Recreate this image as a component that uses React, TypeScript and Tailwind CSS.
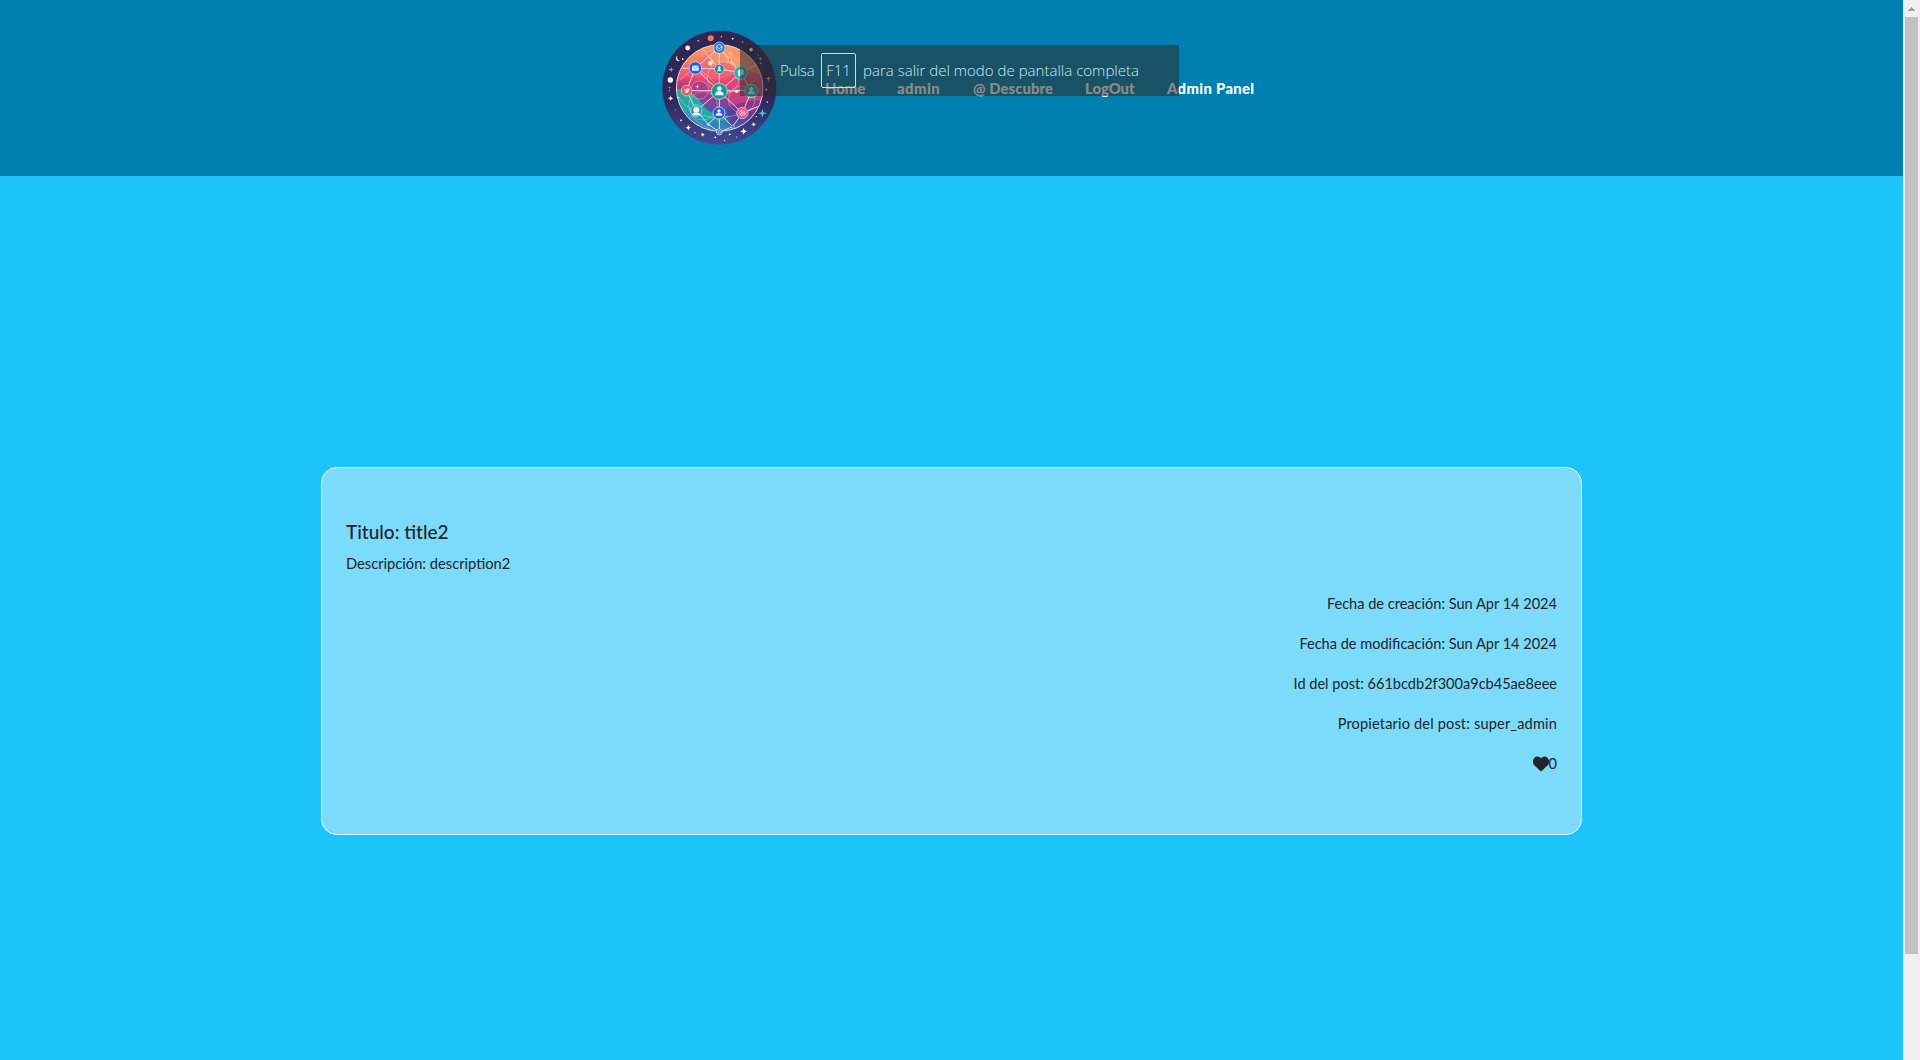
const body = "font-['Lato',sans-serif]";

const stars: [number, number, number][] = [
  [113, 84, 8], [61, 180, 9], [303, 89, 6], [62, 235, 4], [86, 233, 2], [93, 301, 3], [115, 323, 4], [158, 344, 4],
  [281, 334, 5], [311, 313, 4], [239, 343, 3], [332, 130, 3], [349, 209, 3], [60, 149, 2], [98, 117, 3], [145, 62, 3],
  [214, 50, 2], [248, 56, 3], [278, 66, 2], [352, 246, 3], [331, 243, 2], [196, 352, 3], [224, 361, 2], [77, 270, 2],
  [135, 338, 2], [260, 351, 2], [325, 105, 2], [58, 212, 2], [319, 290, 2],
];

const sparkles: [number, number, number, string][] = [
  [337, 280, 14, '#3fc4e8'], [355, 176, 9, '#ff90a0'], [64, 149, 8, '#55c9d6'], [62, 235, 9, '#fff'],
  [115, 323, 9, '#fff'], [281, 334, 11, '#fff'], [311, 313, 8, '#ddd'], [158, 344, 7, '#fff'],
  [59, 203, 5, '#f06b80'], [242, 100, 7, '#ffe3d0'], [142, 200, 7, '#ffd0e8'], [331, 116, 6, '#ddd'],
];

const nodes: [number, number, number, string][] = [
  [208, 83, 17, '#2776cf'], [136, 144, 19, '#315ce0'], [208, 147, 14, '#197e91'], [272, 158, 20, '#1fb5bb'],
  [110, 212, 16, '#ef5060'], [208, 214, 24, '#17998f'], [304, 213, 20, '#22b9b5'], [139, 272, 17, '#348fae'],
  [207, 279, 18, '#3454d8'], [277, 279, 17, '#ef5682'], [208, 336, 9, '#5a63c9'],
];

function Logo() {
  return (
    <svg className="h-[115px] w-[115px]" viewBox="36 30 345 345" aria-label="logo">
      <defs>
        <linearGradient id="ring" x1="0" y1="0" x2="0" y2="1">
          <stop offset="0" stopColor="#30264f" />
          <stop offset=".6" stopColor="#30275b" />
          <stop offset="1" stopColor="#414a94" />
        </linearGradient>
        <linearGradient id="globe" x1=".55" y1="0" x2=".4" y2="1">
          <stop offset="0" stopColor="#fb9c6c" />
          <stop offset=".25" stopColor="#f5805f" />
          <stop offset=".42" stopColor="#e8476d" />
          <stop offset=".6" stopColor="#9c3a8d" />
          <stop offset=".8" stopColor="#445eb5" />
          <stop offset="1" stopColor="#35a5ce" />
        </linearGradient>
        <clipPath id="globeClip"><circle cx="209" cy="204" r="129" /></clipPath>
      </defs>
      <circle cx="208" cy="203" r="171" fill="url(#ring)" />
      <circle cx="209" cy="204" r="130" fill="url(#globe)" />
      <g clipPath="url(#globeClip)">
        <path d="M70 130Q120 150 160 110T260 150Q220 190 170 175T70 190Z" fill="#f06480" opacity=".65" />
        <path d="M220 190Q270 130 340 170V260Q280 300 240 250Z" fill="#d8487e" opacity=".6" />
        <circle cx="149" cy="210" r="27" fill="#a73d8d" opacity=".7" />
        <path d="M78 205Q135 215 155 250T240 290Q190 320 130 310T78 240Z" fill="#16bba5" opacity=".85" />
        <path d="M75 240Q120 290 190 300T290 320L210 340Q110 330 75 240Z" fill="#2c83b8" opacity=".75" />
        <path d="M230 265Q290 240 335 240Q320 310 240 325Z" fill="#5e348f" opacity=".6" />
        <path d="M180 100Q230 80 300 130L280 160Q230 110 180 135Z" fill="#ffa56d" opacity=".6" />
        <g fill="none" stroke="#f6d5d9" strokeWidth="2" opacity=".6">
          <circle cx="149" cy="210" r="27" />
          <circle cx="159" cy="257" r="43" />
          <circle cx="220" cy="173" r="48" />
          <circle cx="275" cy="238" r="40" />
          <path d="M80 225Q160 340 325 260M88 255Q155 325 200 335M90 180Q140 120 190 185T320 175" />
        </g>
      </g>
      <g fill="none" stroke="#ffe4df" strokeWidth="3" opacity=".9">
        <circle cx="209" cy="204" r="130" />
        <path d="M208 83V336M110 212H304M208 214L136 144L110 212L139 272L208 214L272 158L304 213L277 279L208 214M139 272L175 313L207 279L248 320L277 279" />
        <path d="M208 83L136 144L208 147L272 158L208 83M208 147L160 90M272 158L318 135M239 119L272 158M136 144L98 145M277 279L322 260M175 313L208 336L248 320" />
      </g>
      {stars.map(([x, y, r], i) => <circle key={i} cx={x} cy={y} r={r * 0.9} fill={i % 4 === 3 ? '#b9a8cf' : '#fff'} />)}
      <circle cx="182" cy="55" r="9" fill="#ef7a70" />
      <path d="M82 108a8 8 0 1 0 8 14a10 10 0 0 1-8-14Z" fill="#fff" />
      {sparkles.map(([x, y, r, fill], i) => (
        <path key={i} transform={`translate(${x} ${y}) scale(${r})`} d="M0-1L.22-.22L1 0L.22.22L0 1L-.22.22L-1 0L-.22-.22Z" fill={fill} />
      ))}
      <circle cx="181" cy="130" r="7" fill="#ffe9dd" />
      <circle cx="239" cy="119" r="5" fill="#ef6878" stroke="#ffe1d7" strokeWidth="2" />
      <circle cx="260" cy="214" r="5" fill="#fff" />
      <circle cx="175" cy="313" r="5" fill="#9bd3f2" />
      <circle cx="248" cy="320" r="5" fill="#3e70bd" stroke="#bddff7" strokeWidth="2" />
      {nodes.map(([x, y, r, fill], i) => (
        <circle key={i} cx={x} cy={y} r={r} fill={fill} stroke={i === 6 || i === 3 ? '#9fe0dc' : '#b9d8ed'} strokeWidth="2.5" />
      ))}
      <g fill="#e9f5fa">
        <path d="M126 137H146V152H126Z" />
        <circle cx="208" cy="143" r="4" /><path d="M201 154q0-7 7-7t7 7Z" />
        <circle cx="208" cy="206" r="7" /><path d="M195 226q0-12 13-12t13 12Z" />
        <circle cx="207" cy="273" r="5" /><path d="M197 287q0-9 10-9t10 9Z" />
        <circle cx="139" cy="269" r="9" /><path d="M127 286q0-9 12-9t12 9Z" />
        <path d="M102 206l7 4q1-7 8-4l3 1l-3 3q-1 11-14 9l4-3Z" />
        <circle cx="304" cy="207" r="6" /><path d="M293 223q0-10 11-10t11 10Z" />
        <circle cx="273" cy="157" r="9" /><path d="M265 160v9h10Z" />
      </g>
      <path d="M126 138L136 146L146 138" fill="none" stroke="#315ce0" strokeWidth="2" />
      <g fill="none" stroke="#fff" strokeWidth="2.5">
        <circle cx="208" cy="83" r="9" strokeWidth="2" /><path d="M200 80L208 86L216 80" />
        <circle cx="277" cy="279" r="8" strokeDasharray="10 3" /><circle cx="277" cy="279" r="3" />
        <circle cx="208" cy="336" r="4" strokeWidth="1.5" />
      </g>
    </svg>
  );
}

function Header() {
  return (
    <header className="relative h-[176px] bg-[#0080b0] pt-[30px] pl-[662px]">
      <div className="flex items-start">
        <Logo />
        <nav className="flex pt-[46px] pl-12 text-[14.8px] leading-6 font-black whitespace-nowrap text-white">
          <a className="w-[72px]">Home</a>
          <a className="w-[76px] tracking-[0.5px]">admin</a>
          <a className="w-[112px] tracking-[0.1px]">@ Descubre</a>
          <a className="w-[82px]">LogOut</a>
          <a className="tracking-[0.35px]">Admin Panel</a>
        </nav>
      </div>
      <div className="absolute top-[45px] left-[740px] flex h-[51px] w-[439px] items-center bg-[rgba(46,42,42,0.55)] pl-10 font-['Open_Sans',sans-serif] text-[15px] font-light whitespace-nowrap text-[#c4ecf8]">
        <span className="w-[41px] tracking-[-0.3px]">Pulsa</span>
        <span className="flex h-[35px] w-[35px] items-center justify-center rounded-[2px] border border-[#b8e4f2]">F11</span>
        <span className="ml-[7px] tracking-[0.02px]">para salir del modo de pantalla completa</span>
      </div>
    </header>
  );
}

function PostCard() {
  return (
    <article className="mt-[291px] ml-[321px] h-[368px] w-[1261px] rounded-2xl border border-[#e8fbff] bg-[#7cdafa] px-6 pt-[52px] text-[14.55px] leading-6 text-[#212529]">
      <h5 className="mb-[7px] text-[19px] leading-6 font-medium">Titulo: title2</h5>
      <p className="mb-[17px] text-[14.7px]">Descripción: description2</p>
      <div className="flex flex-col items-end gap-4 whitespace-nowrap">
        <p>Fecha de creación: Sun Apr 14 2024</p>
        <p>Fecha de modificación: Sun Apr 14 2024</p>
        <p>Id del post: 661bcdb2f300a9cb45ae8eee</p>
        <p className="tracking-[0.17px]">Propietario del post: super_admin</p>
        <p className="flex items-center">
          <svg className="-mt-px h-4 w-4" viewBox="0 0 16 15" fill="currentColor">
            <path d="M8 15L1.2 8.7C-1.8 5 .8 0 4.4 0C6.3 0 7.5 1 8 2C8.5 1 9.7 0 11.6 0C15.2 0 17.8 5 14.8 8.7Z" />
          </svg>
          <span>0</span>
        </p>
      </div>
    </article>
  );
}

function Scrollbar() {
  return (
    <div className="flex h-full w-[17px] flex-col items-center bg-[#f0f0f0]">
      <svg className="h-[17px] w-[17px]" viewBox="0 0 17 17" shapeRendering="crispEdges">
        <path d="M8 7h1v1h1v1h1v1h1v1H5v-1h1V9h1V8h1Z" fill="#a0a0a0" />
      </svg>
      <div className="h-[937px] w-[13px] bg-[#c1c1c1]" />
    </div>
  );
}

export default function App() {
  return (
    <div className={`flex h-[1060px] w-[1920px] overflow-hidden bg-[#1dc4fa] ${body}`}>
      <main className="w-[1903px]">
        <Header />
        <PostCard />
      </main>
      <Scrollbar />
    </div>
  );
}
